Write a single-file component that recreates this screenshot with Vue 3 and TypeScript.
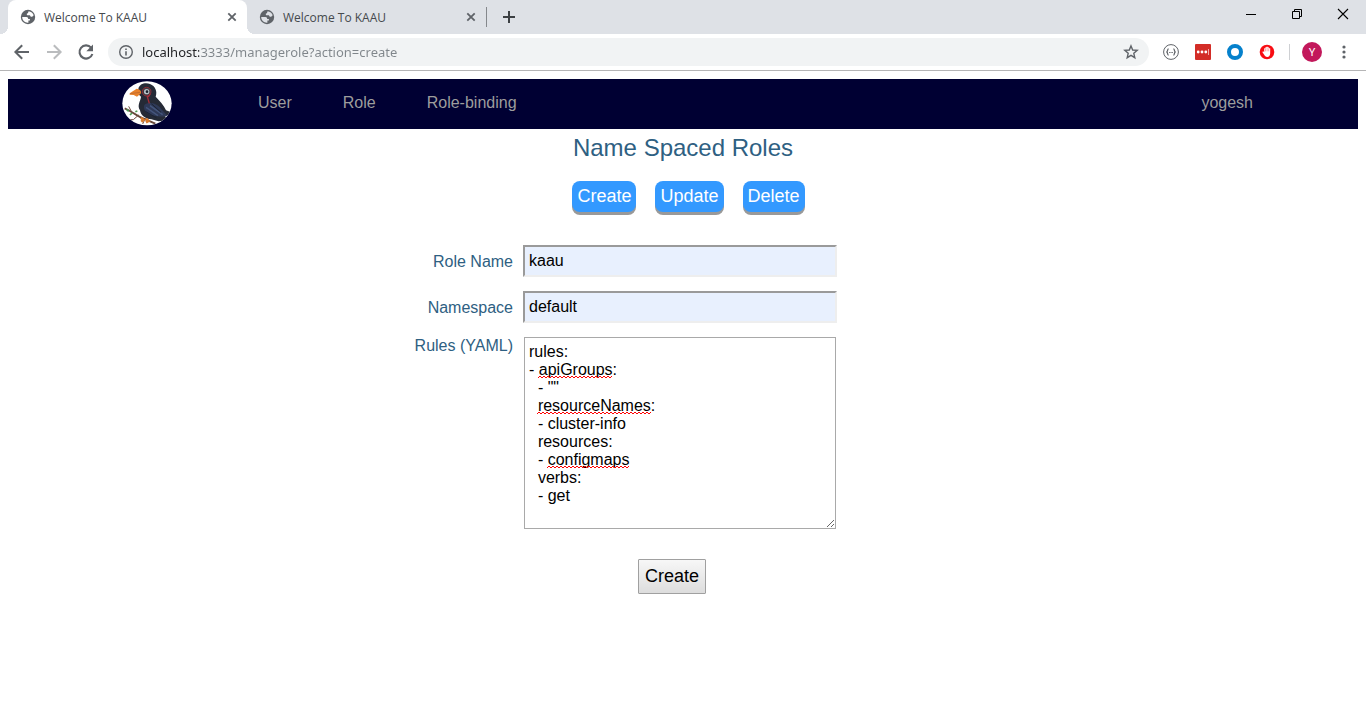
<script setup lang="ts">
import { ref } from 'vue'

interface Misspelling {
  line: number
  left: number
  width: number
}

const tabs = [
  { id: 1, title: 'Welcome To KAAU', active: true },
  { id: 2, title: 'Welcome To KAAU', active: false },
]
const links = ['User', 'Role', 'Role-binding']
const actions = ['Create', 'Update', 'Delete']

const url = ref('localhost:3333/managerole?action=create')
const roleName = ref('kaau')
const namespace = ref('default')
const rules = ref(
  [
    'rules:',
    '- apiGroups:',
    '  - ""',
    '  resourceNames:',
    '  - cluster-info',
    '  resources:',
    '  - configmaps',
    '  verbs:',
    '  - get',
  ].join('\n'),
)

const lineHeight = 18
const misspellings: Misspelling[] = [
  { line: 1, left: 9, width: 74 },
  { line: 3, left: 8, width: 114 },
  { line: 6, left: 18, width: 82 },
]

function wave(m: Misspelling): string {
  const y = m.line * lineHeight + 15
  let d = `M${m.left} ${y + 2}`
  for (let x = 2; x <= m.width; x += 2) {
    d += `L${m.left + x} ${x % 4 === 0 ? y + 2 : y}`
  }
  return d
}
</script>

<template>
  <div class="browser">
    <header class="chrome">
      <div class="strip">
        <div v-for="tab in tabs" :key="tab.id" class="tab" :class="{ active: tab.active }">
          <button class="tab-main" type="button">
            <svg width="16" height="16" viewBox="0 0 16 16" aria-hidden="true">
              <circle cx="8" cy="8" r="7.2" fill="#5f6368" />
              <path d="M8.6 2.2 C11 2.4 13 4 13.7 6.2 L12.2 7.8 H10.8 L9.9 6.3 H7.2 L6.6 5 L8 4 Z" :fill="tab.active ? '#fff' : '#dee1e6'" />
              <path d="M2.2 8.1 H6.4 C7.7 8.1 8.2 9 8.2 10 H9.9 V11.6 H8.4 V13.7 C5 14 2.2 11.5 2.2 8.1 Z" :fill="tab.active ? '#fff' : '#dee1e6'" />
            </svg>
            <span>{{ tab.title }}</span>
          </button>
          <button class="tab-close" type="button" aria-label="Close tab">
            <svg width="16" height="16" viewBox="0 0 16 16"><path d="M4.300 4.300L11.700 11.700M11.700 4.300L4.300 11.700" stroke="#5f6368" stroke-width="1.8" /></svg>
          </button>
        </div>
        <span class="strip-line"></span>
        <button class="new-tab" type="button" aria-label="New tab">
          <svg width="16" height="16" viewBox="0 0 16 16"><path d="M8 2V14M2 8H14" stroke="#3c4043" stroke-width="2" /></svg>
        </button>
        <div class="window-controls">
          <button type="button" aria-label="Minimize">
            <svg width="12" height="12" viewBox="0 0 12 12"><path d="M1 6.5H11" stroke="#000" /></svg>
          </button>
          <button type="button" aria-label="Restore">
            <svg width="12" height="12" viewBox="0 0 12 12" fill="none" stroke="#000"><path d="M1.5 3.5H8.5V10.500H1.5ZM3.5 3.500V1.500H10.500V8.500H8.500" /></svg>
          </button>
          <button type="button" aria-label="Close">
            <svg width="12" height="12" viewBox="0 0 12 12"><path d="M1 1L11 11M11 1L1 11" stroke="#000" stroke-width="1.1" /></svg>
          </button>
        </div>
      </div>

      <div class="toolbar">
        <button class="tool" type="button" aria-label="Back">
          <svg width="24" height="24" viewBox="0 0 24 24" fill="none" stroke="#5f6368" stroke-width="2"><path d="M19 12H6M12.200 5.200L5.400 12L12.200 18.800" /></svg>
        </button>
        <button class="tool" type="button" aria-label="Forward">
          <svg width="24" height="24" viewBox="0 0 24 24" fill="none" stroke="#babcbe" stroke-width="2"><path d="M5 12H18M11.800 5.200L18.600 12L11.800 18.800" /></svg>
        </button>
        <button class="tool" type="button" aria-label="Reload">
          <svg width="24" height="24" viewBox="0 0 24 24"><path d="M17.100 7.600A6.600 6.600 0 1 0 18.400 14" fill="none" stroke="#5f6368" stroke-width="2.100" /><path d="M19 4.500V11.200H12.300Z" fill="#5f6368" /></svg>
        </button>
        <div class="omnibox">
          <svg width="16" height="16" viewBox="0 0 16 16" aria-hidden="true">
            <circle cx="8" cy="8" r="6.300" fill="none" stroke="#5f6368" stroke-width="1.400" />
            <path d="M8 7.200V11.400M8 4.600V6.100" stroke="#5f6368" stroke-width="1.600" />
          </svg>
          <input v-model="url" class="url" type="text" aria-label="Address" spellcheck="false" />
          <button class="star" type="button" aria-label="Bookmark this page">
            <svg width="16" height="16" viewBox="0 0 16 16"><path d="M8 1.900L9.700 6L14.200 6.400L10.800 9.300L11.800 13.700L8 11.300L4.200 13.700L5.200 9.300L1.800 6.400L6.300 6Z" fill="none" stroke="#5f6368" stroke-width="1.400" /></svg>
          </button>
        </div>
        <div class="extensions">
          <button type="button" aria-label="JSON viewer">
            <svg width="16" height="16" viewBox="0 0 16 16" fill="none" stroke="#5f6368">
              <circle cx="8" cy="8" r="7.400" />
              <path d="M5.600 4.900C4 4.900 5.300 7.600 3.500 8C5.300 8.400 4 11.100 5.600 11.100M10.400 4.900C12 4.900 10.700 7.600 12.500 8C10.700 8.400 12 11.100 10.400 11.100" stroke-width="1.300" />
              <path d="M6.200 8.500H9.800" stroke-dasharray="1 .4" />
            </svg>
          </button>
          <button type="button" aria-label="Password manager">
            <svg width="16" height="16" viewBox="0 0 16 16"><rect width="16" height="16" rx="1" fill="#d32d27" /><g fill="#fff"><circle cx="3.200" cy="8" r="1.400" /><circle cx="7" cy="8" r="1.400" /><circle cx="10.800" cy="8" r="1.400" /><rect x="13" y="5" width="1" height="6" fill="#f2aaa8" /></g></svg>
          </button>
          <button type="button" aria-label="Ring">
            <svg width="16" height="16" viewBox="0 0 16 16"><circle cx="8" cy="8" r="6" fill="#fff" stroke="#0581cc" stroke-width="4" /></svg>
          </button>
          <button type="button" aria-label="Content blocker">
            <svg width="16" height="16" viewBox="0 0 16 16"><circle cx="8" cy="8" r="7.300" fill="#f80c12" /><path d="M5 10.500L3.300 8L4.200 7.200L5.200 8.200V4.300H6.400V3.200H7.500V2.700H8.700V3.300H9.800V4.300H11.200V9.300C11.200 11.800 10 12.900 8.300 12.900C6.600 12.900 5.900 12 5 10.500Z" fill="#fff" /><path d="M6.500 4.500V7.300M8.100 3.800V7.300M9.700 4.500V7.300" stroke="#f80c12" stroke-width=".35" /></svg>
          </button>
        </div>
        <span class="tool-line"></span>
        <button class="avatar" type="button" aria-label="Profile Y">Y</button>
        <button class="more" type="button" aria-label="Menu">
          <svg width="16" height="16" viewBox="0 0 16 16" fill="#5f6368"><circle cx="8" cy="3" r="1.600" /><circle cx="8" cy="8" r="1.600" /><circle cx="8" cy="13" r="1.600" /></svg>
        </button>
      </div>
    </header>

    <div class="page">
      <nav class="navbar">
        <a href="#" class="logo" aria-label="Home">
          <svg width="50" height="45" viewBox="0 0 150 135">
            <defs><clipPath id="oval"><ellipse cx="75" cy="67" rx="74" ry="66" /></clipPath></defs>
            <ellipse cx="75" cy="67" rx="74" ry="66" fill="#fff" />
            <g clip-path="url(#oval)">
              <path d="M8 82C30 90 43 106 72 116L100 128" fill="none" stroke="#67483a" stroke-width="6" />
              <path d="M28 91L20 76M50 102L34 116L24 116M70 112L62 129" fill="none" stroke="#755345" stroke-width="3" />
              <path d="M14 85L20 91M30 96L24 102M40 92L46 90" stroke="#4c9b54" stroke-width="5" />
              <path d="M49 24C52 8 70 4 84 9C100 15 107 32 101 47C113 60 126 73 132 88L148 94L138 103L128 103L136 118L110 121L88 115C70 114 56 103 54 88C44 72 56 60 57 47C50 42 47 33 49 24Z" fill="#252a36" />
              <path d="M67 72C78 61 105 66 117 83L136 104C120 110 104 105 90 103C74 99 62 86 67 72Z" fill="#2e3957" />
              <path d="M72 79L108 104M84 74L122 101" stroke="#44557c" stroke-width="4" />
              <path d="M88 68L117 94M70 91L104 111" stroke="#1b2234" stroke-width="3" />
              <path d="M23 37L44 23C53 24 59 30 57 37L45 47L35 42L23 41Z" fill="#e8812b" />
              <path d="M24 38L55 34" stroke="#b0642f" stroke-width="2" />
              <circle cx="74" cy="32" r="13" fill="#3c3c43" stroke="#8c2a35" stroke-width="3" />
              <circle cx="74" cy="32" r="8" fill="#b9c2c8" />
              <circle cx="75" cy="32" r="4" fill="#19202b" />
              <path d="M85 38L80 46L76 47L82 67" fill="none" stroke="#a52c38" stroke-width="4" />
              <path d="M57 110L64 117L58 122M72 113L79 120L72 124" fill="none" stroke="#d87b2e" stroke-width="8" />
            </g>
          </svg>
        </a>
        <ul class="links">
          <li v-for="link in links" :key="link"><a href="#">{{ link }}</a></li>
        </ul>
        <a href="#" class="account">yogesh</a>
      </nav>

      <main>
        <h1>Name Spaced Roles</h1>
        <div class="actions">
          <button v-for="action in actions" :key="action" type="button">{{ action }}</button>
        </div>
        <form class="form" @submit.prevent>
          <label for="role-name">Role Name</label>
          <input id="role-name" v-model="roleName" type="text" />
          <label for="namespace">Namespace</label>
          <input id="namespace" v-model="namespace" type="text" />
          <label for="rules" class="rules-label">Rules (YAML)</label>
          <div class="editor">
            <textarea id="rules" v-model="rules" spellcheck="false"></textarea>
            <svg class="spelling" width="300" height="180" aria-hidden="true">
              <path v-for="m in misspellings" :key="m.line" :d="wave(m)" fill="none" stroke="#f00" />
            </svg>
          </div>
          <button class="submit" type="submit">Create</button>
        </form>
      </main>
    </div>
  </div>
</template>

<style>
body {
  margin: 0;
  background: #fff;
}
</style>

<style scoped>
.browser {
  font-family: "Liberation Sans", Arial, sans-serif;
  font-size: 16px;
}
.browser * {
  box-sizing: border-box;
}
svg {
  display: block;
  flex: none;
}
.chrome {
  border-bottom: 1px solid #b5b5b6;
  font-family: "Open Sans", "Noto Sans", sans-serif;
}
.chrome button {
  display: flex;
  align-items: center;
  justify-content: center;
  padding: 0;
  border: 0;
  background: none;
  font: inherit;
}
.strip {
  display: flex;
  align-items: center;
  height: 34px;
  padding-left: 8px;
  background: #dee1e6;
}
.tab {
  display: flex;
  align-items: center;
  flex: 0 1 239px;
  height: 34px;
  padding: 0 7px 0 12px;
  color: #45494d;
  font-size: 12px;
}
.tab.active {
  position: relative;
  border-radius: 8px 8px 0 0;
  background: #fff;
}
.tab.active::before,
.tab.active::after {
  content: "";
  position: absolute;
  bottom: 0;
  width: 8px;
  height: 8px;
}
.tab.active::before {
  left: -8px;
  background: radial-gradient(circle at 0 0, #dee1e6 8px, #fff 8px);
}
.tab.active::after {
  right: -8px;
  background: radial-gradient(circle at 100% 0, #dee1e6 8px, #fff 8px);
}
.chrome .tab-main {
  flex: 1;
  gap: 8px;
  justify-content: flex-start;
  color: inherit;
}
.strip-line {
  width: 1px;
  height: 20px;
  background: #85888c;
}
.chrome .new-tab {
  width: 28px;
  height: 28px;
  margin-left: 8px;
}
.window-controls {
  display: flex;
  align-self: flex-start;
  margin-left: auto;
}
.window-controls button {
  width: 46px;
  height: 28px;
}
.toolbar {
  display: flex;
  align-items: center;
  height: 36px;
  padding: 0 14px 0 6px;
}
.tool {
  width: 32px;
  height: 32px;
}
.omnibox {
  display: flex;
  flex: 1;
  align-items: center;
  gap: 8px;
  height: 28px;
  margin-left: 6px;
  padding: 0 10px;
  border-radius: 14px;
  background: #f1f3f4;
}
.url {
  flex: 1;
  min-width: 0;
  height: 24px;
  padding: 0;
  border: 0;
  outline: 0;
  background: linear-gradient(to right, #202124 57px, #80868b 57px);
  background-clip: text;
  color: transparent;
  font: 13px "Noto Sans", "Open Sans", sans-serif;
}
.extensions {
  display: flex;
  gap: 16px;
  margin-left: 14px;
}
.tool-line {
  width: 1px;
  height: 16px;
  margin: 0 12px 0 14px;
  background: #ced0d3;
}
.chrome .avatar {
  width: 20px;
  height: 20px;
  border-radius: 50%;
  background: #c2185b;
  color: #fff;
  font: 11px Roboto, sans-serif;
}
.more {
  margin-left: 14px;
}
.page {
  padding: 8px;
}
.navbar {
  display: flex;
  align-items: center;
  height: 50px;
  padding: 0 105px 2px 114px;
  background: #000033;
}
.navbar a {
  color: #9d9d9d;
  text-decoration: none;
}
.links {
  display: flex;
  gap: 51px;
  margin: 0 auto 0 86px;
  padding: 0;
  list-style: none;
}
h1 {
  margin: 5px 0 19px;
  color: #2e6082;
  font-size: 24px;
  font-weight: 400;
  line-height: 28px;
  text-align: center;
}
.actions {
  display: flex;
  justify-content: center;
  gap: 19px;
  padding-left: 11px;
}
.actions button {
  height: 31px;
  padding: 0 5px;
  border: 0;
  border-radius: 8px;
  background: #3399ff;
  box-shadow: 0 3px #999;
  color: #fff;
  font: 18px "Liberation Sans", Arial, sans-serif;
}
.form {
  display: grid;
  grid-template-columns: 1fr 314px 1fr;
  row-gap: 14px;
  margin-top: 33px;
  padding-right: 6px;
}
.form label {
  grid-column: 1;
  padding-right: 10px;
  color: #2e6082;
  line-height: 34px;
  max-height: 32px;
  text-align: right;
}
.form .rules-label {
  line-height: 18px;
}
.form input {
  grid-column: 2;
  height: 32px;
  padding: 0 4px;
  border: 2px solid;
  border-color: #9a9a9a #eee #eee #9a9a9a;
  background: #e8f0fe;
  color: #000;
  font: 16px "Liberation Sans", Arial, sans-serif;
}
.editor {
  position: relative;
  grid-column: 2;
  padding: 0 1px;
}
.editor textarea {
  display: block;
  width: 100%;
  height: 192px;
  padding: 5px 4px;
  border: 1px solid #a9a9a9;
  color: #000;
  font: 16px/18px "Liberation Sans", Arial, sans-serif;
}
.spelling {
  position: absolute;
  top: 6px;
  left: 6px;
  pointer-events: none;
}
.submit {
  grid-column: 2;
  justify-self: center;
  height: 35px;
  margin: 16px 16px 0 0;
  padding: 0 6px;
  border: 1px solid #a0a0a0;
  border-radius: 1px;
  background: linear-gradient(#f7f7f7, #dddddd);
  color: #000;
  font: 18px "Liberation Sans", Arial, sans-serif;
}
</style>
